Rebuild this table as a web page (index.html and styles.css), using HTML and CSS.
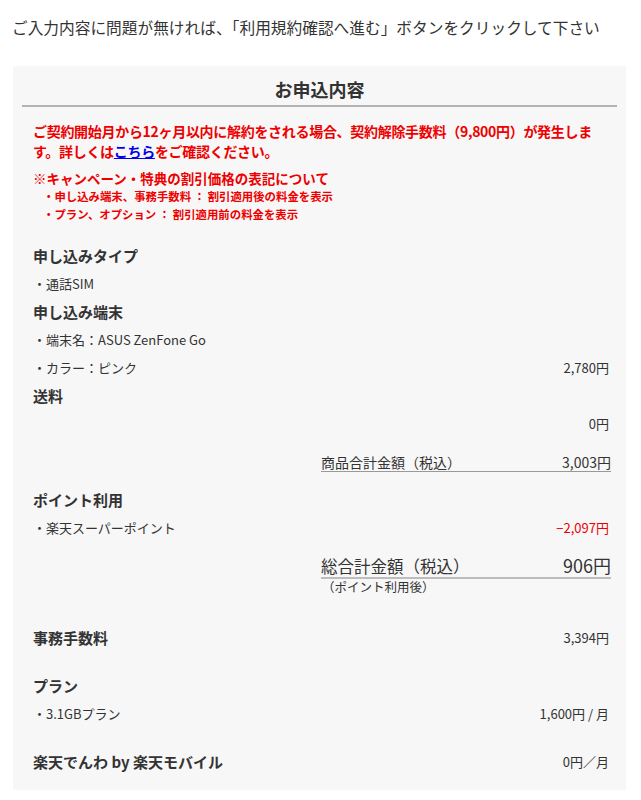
FILE: index.html
```html
<!DOCTYPE html>
<html lang="ja">
<head>
<meta charset="utf-8">
<title>お申込内容</title>
<link rel="stylesheet" href="styles.css">
</head>
<body>
<p class="intro">ご入力内容に問題が無ければ、「利用規約確認へ進む」ボタンをクリックして下さい</p>
<section class="box">
  <h2 class="title">お申込内容</h2>
  <div class="inner">
    <p class="warn">ご契約開始月から12ヶ月以内に解約をされる場合、契約解除手数料（9,800円）が発生します。詳しくは<a href="#" class="link">こちら</a>をご確認ください。</p>
    <div class="notes">
      <p class="note-title">※キャンペーン・特典の割引価格の表記について</p>
      <p class="note-item">・申し込み端末、事務手数料 ： 割引適用後の料金を表示</p>
      <p class="note-item">・プラン、オプション ： 割引適用前の料金を表示</p>
    </div>

    <h3 class="head first">申し込みタイプ</h3>
    <div class="row"><span>・通話SIM</span></div>
    <h3 class="head">申し込み端末</h3>
    <div class="row"><span>・端末名：ASUS ZenFone Go</span></div>
    <div class="row"><span>・カラー：ピンク</span><span class="price">2,780円</span></div>
    <h3 class="head">送料</h3>
    <div class="row"><span></span><span class="price">0円</span></div>

    <div class="subtotal"><span>商品合計金額（税込）</span><span>3,003円</span></div>

    <h3 class="head points">ポイント利用</h3>
    <div class="row"><span>・楽天スーパーポイント</span><span class="price minus">−2,097円</span></div>

    <div class="total"><span class="total-label">総合計金額（税込）</span><span class="total-price">906円</span></div>
    <p class="total-note">（ポイント利用後）</p>

    <div class="row head-row fee"><h3 class="head-inline">事務手数料</h3><span class="price">3,394円</span></div>

    <h3 class="head plan">プラン</h3>
    <div class="row"><span>・3.1GBプラン</span><span class="price">1,600円 / 月</span></div>

    <div class="row head-row call"><h3 class="head-inline">楽天でんわ by 楽天モバイル</h3><span class="price">0円／月</span></div>
  </div>
</section>
</body>
</html>
```

FILE: styles.css
```css
body {
  margin: 0;
  font-family: "Noto Sans CJK JP", "Noto Sans", sans-serif;
  color: #333;
  background: #fff;
}

p, h2, h3 { margin: 0; }

.intro {
  margin: 17px 12px 0;
  font-size: 15.7px;
  line-height: 22px;
  color: #333;
}

.box {
  margin: 27px 15px 0 13px;
  padding: 11px 9px 14px;
  background: #f7f7f7;
}

.title {
  text-align: center;
  font-size: 18px;
  font-weight: bold;
  line-height: 24px;
  padding-bottom: 4px;
  border-bottom: 2px solid #b3b3b3;
  color: #333;
}

.inner {
  padding: 0 8px 0 11px;
}

.warn {
  margin-top: 14px;
  padding-right: 14px;
  font-size: 14px;
  letter-spacing: -0.3px;
  font-weight: bold;
  line-height: 20px;
  color: #ee0000;
}

.link {
  color: #0000ee;
  text-decoration: underline;
}

.notes {
  margin-top: 8px;
  color: #ee0000;
  font-weight: bold;
}

.note-title {
  font-size: 13.5px;
  line-height: 18px;
}

.note-item {
  font-size: 11.4px;
  line-height: 18px;
  padding-left: 10px;
}

.head {
  font-size: 15px;
  font-weight: bold;
  line-height: 28px;
  color: #333;
}

.head.first { margin-top: 19px; }
.head.points { margin-top: 14px; }
.head.plan { margin-top: 20px; }

.row {
  display: flex;
  justify-content: space-between;
  align-items: center;
  font-size: 13px;
  line-height: 28px;
  min-height: 28px;
}

.head-inline {
  font-size: 15px;
  font-weight: bold;
  line-height: 28px;
}

.row.fee { margin-top: 29px; }
.row.call { margin-top: 20px; }

.price { color: #333; }
.price.minus { color: #ee0000; }

.subtotal {
  display: flex;
  justify-content: space-between;
  margin: 15px -2px 0 auto;
  width: 290px;
  font-size: 14px;
  line-height: 18px;
  border-bottom: 1px solid #999;
}

.total {
  display: flex;
  justify-content: space-between;
  align-items: baseline;
  margin: 12px -2px 0 auto;
  width: 290px;
  line-height: 22px;
  border-bottom: 2px solid #bdbdbd;
}

.total-label { font-size: 16.5px; }
.total-price { font-size: 18px; }

.total-note {
  margin-left: 289px;
  font-size: 12.5px;
  line-height: 16px;
}
```
